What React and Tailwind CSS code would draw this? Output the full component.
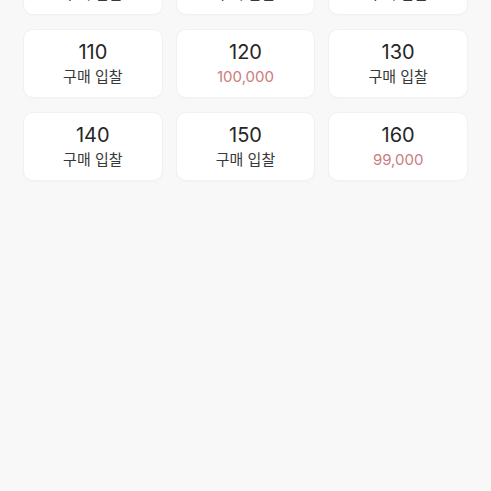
export default function App() {
  const items = [
    { size: "95", price: null },
    { size: "100", price: null },
    { size: "105", price: null },
    { size: "110", price: null },
    { size: "120", price: "100,000" },
    { size: "130", price: null },
    { size: "140", price: null },
    { size: "150", price: null },
    { size: "160", price: "99,000" },
  ];
  return (
    <div
      className="min-h-screen bg-[#f8f8f8] overflow-hidden"
      style={{ fontFamily: 'Inter, "Noto Sans CJK KR", sans-serif' }}
    >
      <div className="grid grid-cols-3 gap-x-[13px] gap-y-[14px] px-[23px] mt-[-54px]">
        {items.map((it) => (
          <div
            key={it.size}
            className="h-[69px] rounded-[10px] bg-white border border-[#f1f1f1] shadow-[0_1px_2px_rgba(0,0,0,0.02)] flex flex-col items-center justify-center"
          >
            <div className="text-[20px] leading-[24px] text-[#262626] font-normal">{it.size}</div>
            <div
              className={
                "text-[15px] leading-[20px] mt-[3px] " +
                (it.price ? "text-[#c97c80]" : "text-[#383838]")
              }
            >
              {it.price ?? "구매 입찰"}
            </div>
          </div>
        ))}
      </div>
    </div>
  );
}
